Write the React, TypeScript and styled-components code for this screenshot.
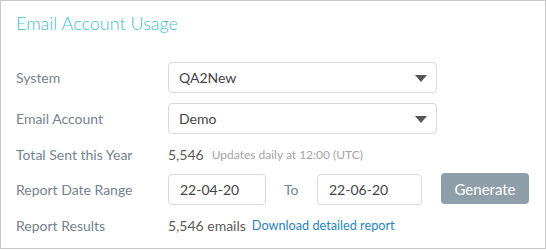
import styled, { createGlobalStyle } from "styled-components";

const GlobalStyle = createGlobalStyle`
  html, body {
    margin: 0;
    padding: 0;
    background: #fff;
  }
  * {
    box-sizing: border-box;
  }
`;

const Panel = styled.div`
  width: 546px;
  height: 249px;
  border: 1px solid #c8c8c8;
  padding: 0 15px;
  font-family: Lato, "Open Sans", sans-serif;
  font-size: 14px;
  color: #555;
`;

const Title = styled.h2`
  margin: 0;
  padding-top: 11px;
  height: 61px;
  font-size: 18px;
  font-weight: 300;
  line-height: 22px;
  color: #3cbfd2;
`;

const Form = styled.div`
  display: flex;
  flex-direction: column;
  gap: 10px;
`;

const Row = styled.div<{ $h: number }>`
  display: flex;
  align-items: center;
  height: ${(p) => p.$h}px;
`;

const Label = styled.label`
  width: 152px;
  flex-shrink: 0;
  color: #74838f;
  font-size: 14px;
`;

const Select = styled.div`
  position: relative;
  width: 269px;
  height: 100%;
  display: flex;
  align-items: center;
  padding: 0 10px;
  border: 1px solid #dadada;
  border-radius: 4px;
  color: #444;
  font-size: 14px;
`;

const Caret = styled.svg`
  position: absolute;
  right: 9px;
  top: 50%;
  margin-top: -3px;
`;

const Value = styled.span`
  color: #5a5a5a;
  font-size: 14px;
`;

const Note = styled.span`
  margin-left: 8px;
  color: #a4a4a4;
  font-size: 12px;
`;

const DateInput = styled.div<{ $w: number }>`
  width: ${(p) => p.$w}px;
  height: 100%;
  display: flex;
  align-items: center;
  padding: 0 11px;
  border: 1px solid #dadada;
  border-radius: 4px;
  color: #444;
`;

const To = styled.span`
  width: 51px;
  padding-left: 18px;
  color: #74838f;
`;

const Button = styled.button`
  margin-left: 19px;
  width: 88px;
  height: 31px;
  margin-top: -2px;
  border: 0;
  border-radius: 4px;
  background: #8e9fa9;
  color: #fff;
  font-family: Lato, sans-serif;
  font-size: 15px;
  cursor: pointer;
`;

const Link = styled.a`
  margin-left: 6px;
  color: #1f84c4;
  font-size: 12.7px;
  text-decoration: none;
`;

function Dropdown({ value }: { value: string }) {
  return (
    <Select>
      {value}
      <Caret width="12" height="7" viewBox="0 0 12 7">
        <path d="M0 0h12L6 7z" fill="#555" />
      </Caret>
    </Select>
  );
}

export default function App() {
  return (
    <>
      <GlobalStyle />
      <Panel>
        <Title>Email Account Usage</Title>
        <Form>
          <Row $h={31}>
            <Label>System</Label>
            <Dropdown value="QA2New" />
          </Row>
          <Row $h={31}>
            <Label>Email Account</Label>
            <Dropdown value="Demo" />
          </Row>
          <Row $h={20}>
            <Label>Total Sent this Year</Label>
            <Value>5,546</Value>
            <Note>Updates daily at 12:00 (UTC)</Note>
          </Row>
          <Row $h={31}>
            <Label>Report Date Range</Label>
            <DateInput $w={98}>22-04-20</DateInput>
            <To>To</To>
            <DateInput $w={105}>22-06-20</DateInput>
            <Button>Generate</Button>
          </Row>
          <Row $h={20}>
            <Label>Report Results</Label>
            <Value>5,546 emails</Value>
            <Link href="#">Download detailed report</Link>
          </Row>
        </Form>
      </Panel>
    </>
  );
}
